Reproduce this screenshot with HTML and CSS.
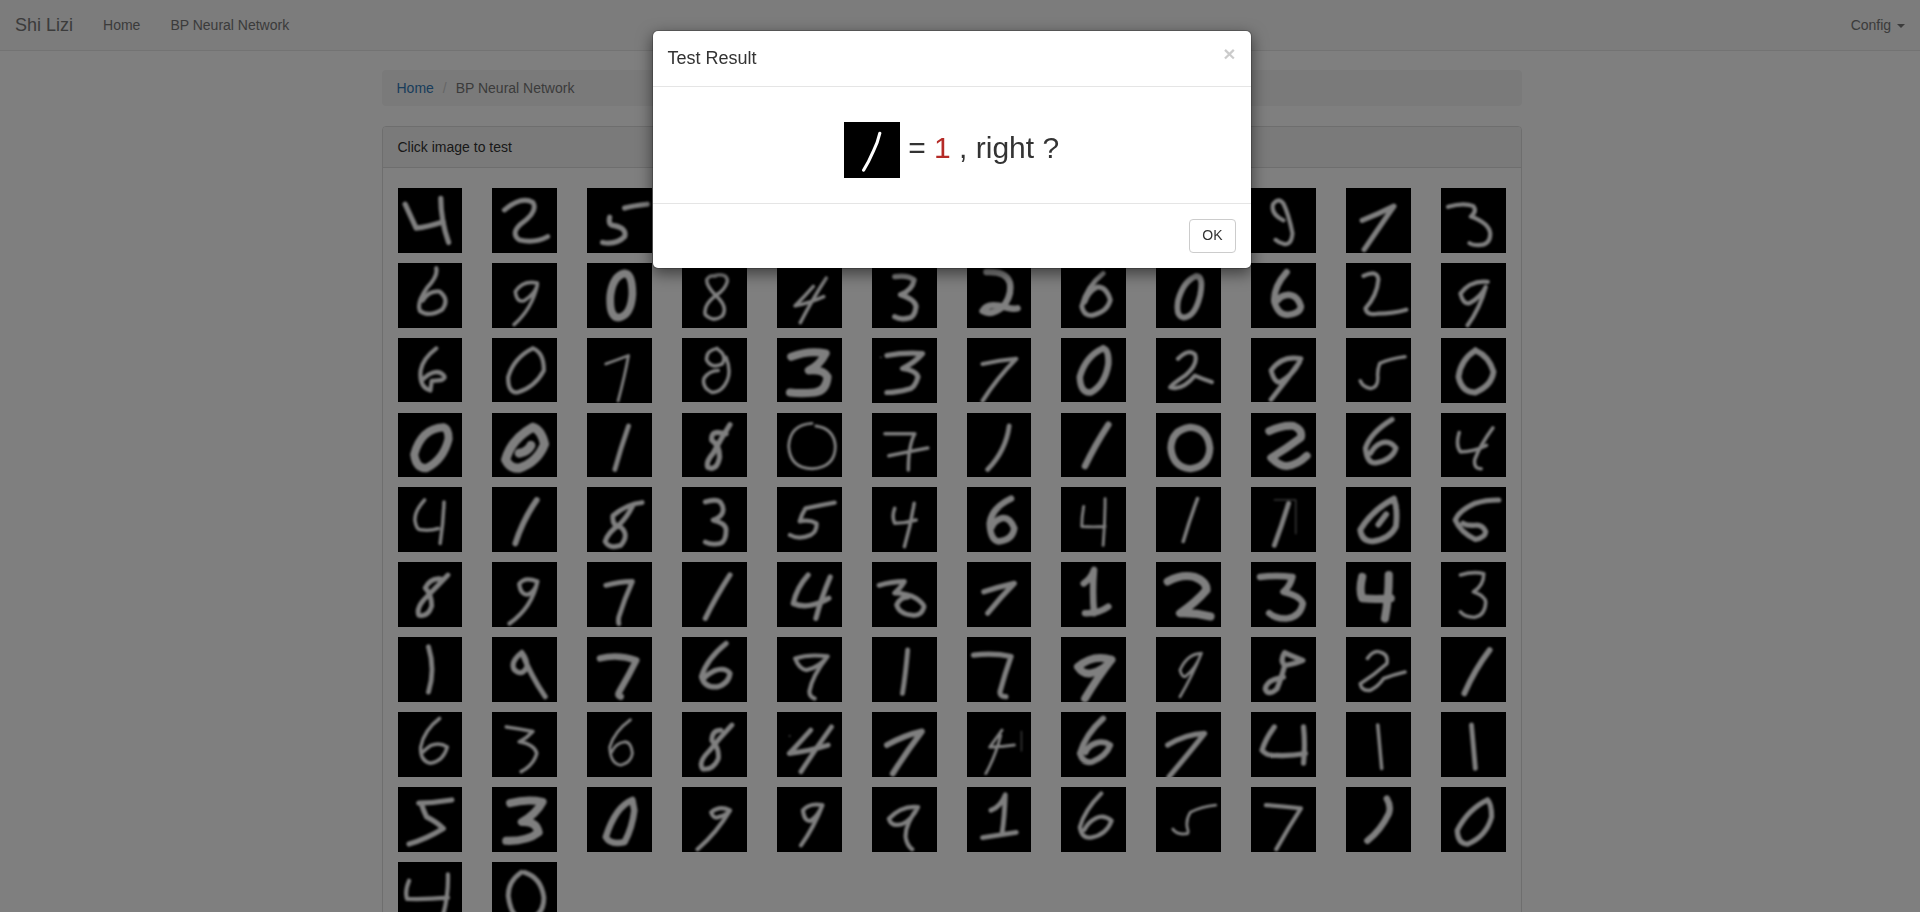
FILE: index.html
```html
<!DOCTYPE html>
<html lang="en">
<head>
    <meta charset="UTF-8">
    <meta name="viewport" content="width=device-width, initial-scale=1.0">
    <title>BP Neural Network</title>
    <link rel="stylesheet" href="styles.css">
</head>
<body>

    <nav class="navbar">
        <a class="navbar-brand" href="#">Shi Lizi</a>
        <ul class="navbar-nav">
            <li><a href="#">Home</a></li>
            <li><a href="#">BP Neural Network</a></li>
        </ul>
        <ul class="navbar-nav navbar-right">
            <li><a href="#">Config <span class="caret"></span></a></li>
        </ul>
    </nav>

    <div class="container">
        <ol class="breadcrumb">
            <li><a href="#">Home</a></li>
            <li class="active">BP Neural Network</li>
        </ol>

        <div class="panel">
            <div class="panel-heading">Click image to test</div>
            <div class="panel-body">
                <div class="digit-grid">
                    <!-- row 1 -->
                    <div class="cell"><svg class="digit w9" viewBox="0 0 100 100"><path d="M11 25 L28 62 Q45 60 70 52 M66 16 Q66 50 78 84"/></svg></div>
                    <div class="cell"><svg class="digit w8" viewBox="0 0 100 100"><path d="M19 34 Q45 12 63 22 Q72 36 45 55 Q28 70 42 80 Q65 86 86 75"/></svg></div>
                    <div class="cell"><svg class="digit w9" viewBox="0 0 100 100"><path d="M93 25 Q72 27 58 31 M35 45 Q32 58 42 58 Q62 62 58 75 Q45 88 24 84"/></svg></div>
                    <div class="cell"><svg class="digit w8" viewBox="0 0 100 100"><path d="M30 20 H70 L45 90"/></svg></div>
                    <div class="cell"><svg class="digit w8" viewBox="0 0 100 100"><path d="M60 18 L45 85"/></svg></div>
                    <div class="cell"><svg class="digit w8" viewBox="0 0 100 100"><path d="M30 25 Q60 10 66 35 Q60 60 30 80 H75"/></svg></div>
                    <div class="cell"><svg class="digit w8" viewBox="0 0 100 100"><path d="M68 20 Q30 20 32 50 Q34 84 52 84 Q74 78 68 55 Q50 44 34 58"/></svg></div>
                    <div class="cell"><svg class="digit w8" viewBox="0 0 100 100"><path d="M50 16 Q28 40 32 66 Q46 90 68 66 Q74 34 50 16"/></svg></div>
                    <div class="cell"><svg class="digit w8" viewBox="0 0 100 100"><path d="M30 25 H72 Q50 45 48 52 Q74 60 66 80 Q48 92 30 80"/></svg></div>
                    <div class="cell"><svg class="digit w7" viewBox="0 0 100 100"><path d="M50 50 Q30 40 34 25 Q42 14 50 24 Q58 40 64 70 Q62 90 50 86 Q42 84 38 80"/></svg></div>
                    <div class="cell"><svg class="digit w9" viewBox="0 0 100 100"><path d="M25 50 Q50 40 74 28 Q55 55 28 95"/></svg></div>
                    <div class="cell"><svg class="digit w7" viewBox="0 0 100 100"><path d="M11 29 Q35 22 50 28 Q56 36 46 44 Q74 54 76 70 Q76 88 58 88 Q48 88 44 85"/></svg></div>
                    <!-- row 2 -->
                    <div class="cell"><svg class="digit w7" viewBox="0 0 100 100"><path d="M59 8 Q62 20 45 38 Q28 62 34 74 Q48 84 68 72 Q80 56 64 44 Q48 42 38 58"/></svg></div>
                    <div class="cell"><svg class="digit w6" viewBox="0 0 100 100"><path d="M70 31 Q48 26 36 44 Q38 62 50 58 Q66 48 70 34 Q62 70 34 95"/></svg></div>
                    <div class="cell"><svg class="digit w13" viewBox="0 0 100 100"><path d="M58 16 Q40 20 36 50 Q34 86 50 84 Q68 80 70 48 Q70 16 58 16"/></svg></div>
                    <div class="cell"><svg class="digit w6" viewBox="0 0 100 100"><path d="M48 20 Q70 14 70 28 Q66 42 52 50 Q72 68 62 82 Q48 92 36 80 Q32 66 52 50 Q38 36 38 26 Q42 18 52 20"/></svg></div>
                    <div class="cell"><svg class="digit w6" viewBox="0 0 100 100"><path d="M76 23 Q55 55 36 92 M56 36 Q42 52 28 66 Q50 62 72 52"/></svg></div>
                    <div class="cell"><svg class="digit w9" viewBox="0 0 100 100"><path d="M35 21 Q55 18 65 26 Q62 42 44 49 Q66 56 68 67 Q66 84 56 85 Q44 88 35 83"/></svg></div>
                    <div class="cell"><svg class="digit w11" viewBox="0 0 100 100"><path d="M30 14 Q60 12 66 30 Q70 50 55 68 Q38 82 24 74 Q30 62 50 66 Q68 72 78 70"/></svg></div>
                    <div class="cell"><svg class="digit w8" viewBox="0 0 100 100"><path d="M65 16 Q40 36 32 67 Q36 84 51 80 Q72 74 76 57 Q70 36 56 37 Q42 44 37 60"/></svg></div>
                    <div class="cell"><svg class="digit w10" viewBox="0 0 100 100"><path d="M62 20 Q42 28 34 58 Q30 82 42 84 Q60 84 68 50 Q74 20 62 20"/></svg></div>
                    <div class="cell"><svg class="digit w11" viewBox="0 0 100 100"><path d="M55 14 Q34 38 36 60 Q42 80 56 80 Q76 78 77 67 Q72 50 58 49 Q46 50 42 57"/></svg></div>
                    <div class="cell"><svg class="digit w7" viewBox="0 0 100 100"><path d="M27 20 Q48 10 50 25 Q48 50 30 70 Q32 82 50 78 Q72 78 93 72"/></svg></div>
                    <div class="cell"><svg class="digit w7" viewBox="0 0 100 100"><path d="M72 29 Q46 26 30 47 Q34 64 44 62 Q62 52 69 37 Q60 70 41 96"/></svg></div>
                    <!-- row 3 -->
                    <div class="cell"><svg class="digit w7" viewBox="0 0 100 100"><path d="M59 16 Q38 32 35 50 Q32 76 50 81 L52 66 Q76 66 71 58 Q62 48 48 56 Q40 62 36 66"/></svg></div>
                    <div class="cell"><svg class="digit w7" viewBox="0 0 100 100"><path d="M63 16 Q34 30 25 60 Q24 84 39 84 Q66 76 80 50 Q80 22 63 16"/></svg></div>
                    <div class="cell"><svg class="digit w5" viewBox="0 0 100 100"><path d="M29 40 Q46 34 64 27 Q58 60 48 97"/></svg></div>
                    <div class="cell"><svg class="digit w6" viewBox="0 0 100 100"><path d="M54 16 Q36 20 38 34 Q46 48 62 40 Q70 28 56 18 M68 30 Q76 50 70 65 Q62 84 46 84 Q30 76 34 62 Q42 50 56 50"/></svg></div>
                    <div class="cell"><svg class="digit w14" viewBox="0 0 100 100"><path d="M22 29 Q50 18 75 24 Q66 42 49 50 Q72 48 78 60 Q76 82 58 84 Q36 86 20 84"/></svg></div>
                    <div class="cell"><svg class="digit w9" viewBox="0 0 100 100"><path d="M23 27 Q50 22 78 24 Q66 38 47 47 Q68 50 71 60 Q66 78 56 79 Q38 84 23 84"/><path class="speck" d="M13 30 h1"/></svg></div>
                    <div class="cell"><svg class="digit w7" viewBox="0 0 100 100"><path d="M24 40 Q50 34 76 32 Q46 62 24 97"/></svg></div>
                    <div class="cell"><svg class="digit w11" viewBox="0 0 100 100"><path d="M65 16 Q38 28 29 60 Q30 86 46 84 Q68 72 73 40 Q74 18 65 16"/></svg></div>
                    <div class="cell"><svg class="digit w7" viewBox="0 0 100 100"><path d="M34 32 Q50 16 60 25 Q66 40 45 58 Q24 72 22 76 Q40 82 60 58 Q74 64 86 68"/></svg></div>
                    <div class="cell"><svg class="digit w8" viewBox="0 0 100 100"><path d="M77 32 Q48 26 31 50 Q36 70 45 68 Q64 58 75 37 Q54 66 31 95"/></svg></div>
                    <div class="cell"><svg class="digit w6" viewBox="0 0 100 100"><path d="M91 29 Q68 32 52 39 Q48 50 49 60 Q50 76 38 78 Q26 76 22 66"/></svg></div>
                    <div class="cell"><svg class="digit w10" viewBox="0 0 100 100"><path d="M53 19 Q30 34 27 60 Q32 84 53 84 Q78 74 81 52 Q74 28 53 19"/></svg></div>
                    <!-- row 4 -->
                    <div class="cell"><svg class="digit w14" viewBox="0 0 100 100"><path d="M70 22 Q36 24 25 64 Q28 86 44 85 Q70 72 78 40 Q78 24 70 22"/></svg></div>
                    <div class="cell"><svg class="digit w15" viewBox="0 0 100 100"><path d="M63 22 Q30 40 21 72 Q28 86 42 85 Q70 76 81 48 Q76 26 63 22 M42 62 Q55 60 60 50"/></svg></div>
                    <div class="cell"><svg class="digit w8" viewBox="0 0 100 100"><path d="M64 20 Q52 54 43 87"/></svg></div>
                    <div class="cell"><svg class="digit w9" viewBox="0 0 100 100"><path d="M74 18 Q60 40 48 62 Q36 76 40 84 Q54 90 58 68 Q58 50 46 42 Q44 30 56 30 L68 32"/></svg></div>
                    <div class="cell"><svg class="digit w5" viewBox="0 0 100 100"><path d="M54 16 Q20 18 18 51 Q20 85 54 86 Q90 84 90 51 Q88 24 60 20"/></svg></div>
                    <div class="cell"><svg class="digit w6" viewBox="0 0 100 100"><path d="M20 32 Q45 32 66 32 Q56 50 56 88 M26 66 Q55 60 86 54"/></svg></div>
                    <div class="cell"><svg class="digit w8" viewBox="0 0 100 100"><path d="M65 20 Q60 58 32 87"/></svg></div>
                    <div class="cell"><svg class="digit w11" viewBox="0 0 100 100"><path d="M73 18 Q52 50 37 82"/></svg></div>
                    <div class="cell"><svg class="digit w12" viewBox="0 0 100 100"><path d="M53 22 Q24 26 23 54 Q26 84 53 86 Q82 82 83 54 Q80 24 53 22"/></svg></div>
                    <div class="cell"><svg class="digit w13" viewBox="0 0 100 100"><path d="M28 28 Q50 18 66 20 Q80 26 77 38 Q56 54 31 69 Q44 82 55 82 Q72 80 86 66"/></svg></div>
                    <div class="cell"><svg class="digit w9" viewBox="0 0 100 100"><path d="M71 10 Q38 30 30 54 Q32 78 46 77 Q72 72 77 54 Q68 42 55 46 Q44 50 38 62"/></svg></div>
                    <div class="cell"><svg class="digit w6" viewBox="0 0 100 100"><path d="M28 30 Q22 50 30 60 Q50 60 70 50 M80 23 Q60 50 52 72 Q50 86 62 86"/></svg></div>
                    <!-- row 5 -->
                    <div class="cell"><svg class="digit w6" viewBox="0 0 100 100"><path d="M41 20 Q26 36 26 51 Q28 66 35 66 Q50 68 62 64 M71 23 Q70 55 65 87"/></svg></div>
                    <div class="cell"><svg class="digit w10" viewBox="0 0 100 100"><path d="M69 20 Q48 50 36 87"/></svg></div>
                    <div class="cell"><svg class="digit w8" viewBox="0 0 100 100"><path d="M85 24 Q62 26 40 44 Q38 60 52 62 Q66 74 52 90 Q34 96 28 84 Q32 70 50 58 Q62 46 70 30"/></svg></div>
                    <div class="cell"><svg class="digit w8" viewBox="0 0 100 100"><path d="M36 23 Q52 18 59 23 Q66 32 62 41 Q58 48 48 51 Q68 56 68 66 Q68 84 59 87 Q46 90 36 85"/></svg></div>
                    <div class="cell"><svg class="digit w7" viewBox="0 0 100 100"><path d="M89 24 Q66 28 44 33 Q38 42 35 53 Q50 50 61 56 Q62 68 52 74 Q34 82 20 74"/></svg></div>
                    <div class="cell"><svg class="digit w6" viewBox="0 0 100 100"><path d="M35 33 Q30 46 35 56 Q52 56 68 51 M65 25 Q60 58 50 92"/></svg></div>
                    <div class="cell"><svg class="digit w11" viewBox="0 0 100 100"><path d="M68 18 Q38 32 35 56 Q36 82 49 84 Q70 82 73 64 Q66 46 54 48 Q42 52 38 62"/></svg></div>
                    <div class="cell"><svg class="digit w5" viewBox="0 0 100 100"><path d="M35 30 Q32 46 32 61 Q50 62 68 61 M68 18 Q68 54 65 90"/></svg></div>
                    <div class="cell"><svg class="digit w6" viewBox="0 0 100 100"><path d="M64 18 Q52 50 42 84"/></svg></div>
                    <div class="cell"><svg class="digit w8" viewBox="0 0 100 100"><path d="M58 25 Q48 58 36 90"/><path class="faint" d="M36 20 H69 V72"/></svg></div>
                    <div class="cell"><svg class="digit w10" viewBox="0 0 100 100"><path d="M74 18 Q40 36 22 66 Q24 84 41 84 Q68 80 77 61 Q80 34 74 18 M62 42 Q56 50 50 58"/></svg></div>
                    <div class="cell"><svg class="digit w9" viewBox="0 0 100 100"><path d="M89 20 Q68 20 53 25 Q28 36 22 51 Q30 70 53 81 Q68 78 69 69 Q64 58 53 59 Q40 60 34 56"/></svg></div>
                    <!-- row 6 -->
                    <div class="cell"><svg class="digit w8" viewBox="0 0 100 100"><path d="M77 20 Q60 38 40 58 Q28 72 32 82 Q46 86 52 68 Q52 50 42 40 Q50 24 66 26"/></svg></div>
                    <div class="cell"><svg class="digit w7" viewBox="0 0 100 100"><path d="M70 30 Q50 22 42 34 Q44 52 56 50 Q68 44 70 30 Q62 70 27 95"/></svg></div>
                    <div class="cell"><svg class="digit w8" viewBox="0 0 100 100"><path d="M29 36 Q50 30 70 30 Q58 56 49 85 Q48 92 49 95"/></svg></div>
                    <div class="cell"><svg class="digit w9" viewBox="0 0 100 100"><path d="M74 20 Q52 54 36 87"/></svg></div>
                    <div class="cell"><svg class="digit w9" viewBox="0 0 100 100"><path d="M48 20 Q30 40 25 64 Q40 70 55 66 Q70 62 80 56 M82 23 Q68 56 60 87"/></svg></div>
                    <div class="cell"><svg class="digit w8" viewBox="0 0 100 100"><path d="M11 36 Q30 30 50 30 Q46 38 35 48 Q55 48 68 56 Q82 66 80 70 Q76 84 62 82 Q42 80 38 66 Q44 54 56 54"/></svg></div>
                    <div class="cell"><svg class="digit w9" viewBox="0 0 100 100"><path d="M26 46 Q50 38 73 33 Q52 54 32 79"/></svg></div>
                    <div class="cell"><svg class="digit w11" viewBox="0 0 100 100"><path d="M35 33 Q46 26 51 12 Q48 46 51 79 M37 79 Q58 80 73 69"/></svg></div>
                    <div class="cell"><svg class="digit w14" viewBox="0 0 100 100"><path d="M18 30 Q40 18 59 23 Q78 30 78 43 Q62 62 37 79 Q60 78 84 84"/></svg></div>
                    <div class="cell"><svg class="digit w11" viewBox="0 0 100 100"><path d="M14 23 Q40 20 64 23 Q60 38 50 46 Q76 52 80 64 Q76 84 56 87 Q38 88 28 79"/></svg></div>
                    <div class="cell"><svg class="digit w14" viewBox="0 0 100 100"><path d="M25 23 Q20 44 25 56 Q46 58 69 56 M66 20 Q66 56 60 87"/></svg></div>
                    <div class="cell"><svg class="digit w6" viewBox="0 0 100 100"><path d="M30 20 Q50 14 66 18 Q66 36 50 46 Q68 52 69 62 Q68 82 53 85 Q38 86 30 77"/></svg></div>
                    <!-- row 7 -->
                    <div class="cell"><svg class="digit w8" viewBox="0 0 100 100"><path d="M47 15 Q58 50 47 85"/></svg></div>
                    <div class="cell"><svg class="digit w9" viewBox="0 0 100 100"><path d="M46 24 Q28 38 34 50 Q46 62 54 46 Q54 34 46 24 Q60 60 82 92"/></svg></div>
                    <div class="cell"><svg class="digit w11" viewBox="0 0 100 100"><path d="M20 33 Q48 26 76 36 Q64 60 50 84 Q46 90 52 92"/></svg></div>
                    <div class="cell"><svg class="digit w9" viewBox="0 0 100 100"><path d="M68 10 Q38 34 30 61 Q34 78 54 77 Q72 72 74 56 Q66 46 50 52 Q38 58 32 66"/></svg></div>
                    <div class="cell"><svg class="digit w7" viewBox="0 0 100 100"><path d="M78 30 Q50 26 28 33 Q34 50 46 51 Q66 46 78 30 Q54 60 50 84 Q50 92 58 95"/></svg></div>
                    <div class="cell"><svg class="digit w8" viewBox="0 0 100 100"><path d="M55 20 Q52 56 47 87"/></svg></div>
                    <div class="cell"><svg class="digit w9" viewBox="0 0 100 100"><path d="M10 28 Q40 24 68 30 Q58 58 51 84 Q50 92 60 92"/></svg></div>
                    <div class="cell"><svg class="digit w13" viewBox="0 0 100 100"><path d="M78 35 Q50 26 26 46 Q34 58 46 56 Q66 52 78 35 Q58 60 37 95"/></svg></div>
                    <div class="cell"><svg class="digit w5" viewBox="0 0 100 100"><path d="M70 25 Q48 26 37 51 Q40 62 45 61 Q62 48 70 25 Q56 60 37 92"/></svg></div>
                    <div class="cell"><svg class="digit w9" viewBox="0 0 100 100"><path d="M80 36 Q60 28 52 24 Q44 36 52 44 Q72 40 80 36 M52 44 Q46 66 40 80 Q26 92 22 80 Q24 66 50 62"/></svg></div>
                    <div class="cell"><svg class="digit w6" viewBox="0 0 100 100"><path d="M33 33 Q42 20 52 23 Q66 26 63 41 Q44 58 22 72 Q24 84 38 82 Q50 76 58 64 Q74 58 91 54"/></svg></div>
                    <div class="cell"><svg class="digit w10" viewBox="0 0 100 100"><path d="M75 20 Q52 50 36 87"/></svg></div>
                    <!-- row 8 -->
                    <div class="cell"><svg class="digit w6" viewBox="0 0 100 100"><path d="M64 10 Q40 28 35 54 Q34 76 50 79 Q70 76 76 54 Q64 46 50 52 Q44 56 38 62"/></svg></div>
                    <div class="cell"><svg class="digit w6" viewBox="0 0 100 100"><path d="M22 23 Q44 26 63 30 Q54 40 42 46 Q66 50 69 64 Q64 82 45 92"/></svg></div>
                    <div class="cell"><svg class="digit w5" viewBox="0 0 100 100"><path d="M67 12 Q42 30 35 54 Q36 80 52 82 Q68 78 70 64 Q68 46 58 46 Q44 48 38 62"/></svg></div>
                    <div class="cell"><svg class="digit w8" viewBox="0 0 100 100"><path d="M77 20 Q58 40 42 60 Q24 78 32 88 Q48 90 56 72 Q58 56 46 44 Q46 28 60 28"/></svg></div>
                    <div class="cell"><svg class="digit w8" viewBox="0 0 100 100"><path d="M84 23 Q60 56 37 92 M52 28 Q34 48 19 64 Q50 60 79 51"/><path class="speck" d="M19 37 h1"/></svg></div>
                    <div class="cell"><svg class="digit w10" viewBox="0 0 100 100"><path d="M23 51 Q50 36 77 30 Q54 60 32 95"/></svg></div>
                    <div class="cell"><svg class="digit w5" viewBox="0 0 100 100"><path d="M54 28 Q44 42 35 54 Q54 54 73 51 M52 36 Q44 68 29 95"/><path class="faint" d="M84 30 V60"/></svg></div>
                    <div class="cell"><svg class="digit w10" viewBox="0 0 100 100"><path d="M65 10 Q38 34 29 64 Q34 80 48 77 Q70 68 76 51 Q66 44 54 48 Q42 52 38 62"/></svg></div>
                    <div class="cell"><svg class="digit w9" viewBox="0 0 100 100"><path d="M18 51 Q46 34 75 33 Q52 62 20 100"/></svg></div>
                    <div class="cell"><svg class="digit w9" viewBox="0 0 100 100"><path d="M36 23 Q22 42 17 59 Q24 68 39 67 Q62 68 84 64 M81 23 Q84 50 81 79"/></svg></div>
                    <div class="cell"><svg class="digit w6" viewBox="0 0 100 100"><path d="M49 20 Q52 54 55 87"/></svg></div>
                    <div class="cell"><svg class="digit w8" viewBox="0 0 100 100"><path d="M47 20 Q50 54 53 87"/></svg></div>
                    <!-- row 9 -->
                    <div class="cell"><svg class="digit w9" viewBox="0 0 100 100"><path d="M32 25 Q58 24 83 20 M36 26 Q40 38 44 46 Q60 54 70 64 Q44 80 17 88"/></svg></div>
                    <div class="cell"><svg class="digit w14" viewBox="0 0 100 100"><path d="M28 25 Q54 18 78 23 Q68 42 46 54 Q68 52 72 70 Q54 84 22 83"/></svg></div>
                    <div class="cell"><svg class="digit w11" viewBox="0 0 100 100"><path d="M70 20 Q44 30 29 77 Q36 90 58 85 Q70 62 73 36 L70 20"/></svg></div>
                    <div class="cell"><svg class="digit w7" viewBox="0 0 100 100"><path d="M74 36 Q58 28 45 39 Q48 50 57 46 Q68 44 74 36 Q54 70 24 96"/></svg></div>
                    <div class="cell"><svg class="digit w7" viewBox="0 0 100 100"><path d="M70 28 Q50 24 40 36 Q42 54 52 52 Q64 44 70 28 Q58 60 37 90"/></svg></div>
                    <div class="cell"><svg class="digit w7" viewBox="0 0 100 100"><path d="M71 31 Q46 28 26 49 Q30 62 47 57 Q62 50 71 31 Q50 60 52 78 Q54 90 62 96"/></svg></div>
                    <div class="cell"><svg class="digit w8" viewBox="0 0 100 100"><path d="M37 36 Q52 30 59 12 Q58 46 54 72 M24 78 Q50 74 76 70"/></svg></div>
                    <div class="cell"><svg class="digit w7" viewBox="0 0 100 100"><path d="M62 10 Q36 36 29 62 Q32 80 46 78 Q70 74 78 52 Q66 42 54 48 Q42 54 36 66"/></svg></div>
                    <div class="cell"><svg class="digit w5" viewBox="0 0 100 100"><path d="M92 28 Q70 30 53 39 Q46 50 48 62 Q52 74 45 72 Q32 74 26 65"/></svg></div>
                    <div class="cell"><svg class="digit w7" viewBox="0 0 100 100"><path d="M23 28 Q50 30 77 33 Q58 62 39 96"/></svg></div>
                    <div class="cell"><svg class="digit w11" viewBox="0 0 100 100"><path d="M63 18 Q70 30 66 41 Q54 66 33 83"/></svg></div>
                    <div class="cell"><svg class="digit w9" viewBox="0 0 100 100"><path d="M72 20 Q42 34 25 67 Q26 88 41 88 Q70 76 78 46 Q78 26 72 20"/></svg></div>
                    <!-- row 10 -->
                    <div class="cell"><svg class="digit w7" viewBox="0 0 100 100"><path d="M17 29 Q10 46 14 57 Q44 58 77 55 M77 19 Q78 50 70 80"/></svg></div>
                    <div class="cell"><svg class="digit w8" viewBox="0 0 100 100"><path d="M45 16 Q25 30 25 52 Q30 90 52 90 Q80 84 80 55 Q76 24 50 16"/></svg></div>
                </div>
            </div>
        </div>
    </div>

    <div class="modal-backdrop"></div>

    <div class="modal">
        <div class="modal-dialog">
            <div class="modal-header">
                <button class="close" type="button">&times;</button>
                <h4 class="modal-title">Test Result</h4>
            </div>
            <div class="modal-body">
                <h2 class="result"><svg class="digit result-digit w6" viewBox="0 0 100 100"><path d="M64 20 Q60 38 52 53 Q44 72 35 86"/></svg> = <span class="answer">1</span> , right ?</h2>
            </div>
            <div class="modal-footer">
                <button class="btn" type="button">OK</button>
            </div>
        </div>
    </div>

</body>
</html>
```

FILE: styles.css
```css
* {
    box-sizing: border-box;
}

body {
    font-family: "Liberation Sans", Arial, sans-serif;
    font-size: 14px;
    line-height: 1.42857;
    color: #333;
    background-color: #fff;
    margin: 0;
    padding: 70px 17px 0 0;
    height: 912px;
    overflow: hidden;
}

a {
    color: #337ab7;
    text-decoration: none;
}

ul, ol {
    list-style: none;
    margin: 0;
    padding: 0;
}

.navbar {
    position: fixed;
    top: 0;
    left: 0;
    right: 0;
    z-index: 10;
    display: flex;
    min-height: 51px;
    background-color: #f8f8f8;
    border-bottom: 1px solid #e7e7e7;
}

.navbar-brand {
    font-size: 18px;
    line-height: 20px;
    padding: 15px;
    color: #777;
}

.navbar-nav {
    display: flex;
}

.navbar-nav a {
    display: block;
    line-height: 20px;
    padding: 15px;
    color: #777;
}

.navbar-right {
    margin-left: auto;
}

.caret {
    display: inline-block;
    width: 0;
    height: 0;
    margin-left: 2px;
    vertical-align: middle;
    border-top: 4px solid #777;
    border-right: 4px solid transparent;
    border-left: 4px solid transparent;
}

.container {
    width: 1170px;
    margin: 0 auto;
    padding: 0 15px;
}

.breadcrumb {
    display: flex;
    gap: 4px;
    padding: 9px 15px 7px;
    margin-bottom: 20px;
    background-color: #f5f5f5;
    border-radius: 4px;
}

.breadcrumb li + li::before {
    content: "/\00a0";
    padding: 0 5px;
    color: #ccc;
}

.breadcrumb .active {
    color: #777;
}

.panel {
    background-color: #fff;
    border: 1px solid #ddd;
    border-radius: 4px;
    margin-bottom: 20px;
}

.panel-heading {
    padding: 11px 15px 9px;
    background-color: #f5f5f5;
    border-bottom: 1px solid #ddd;
    border-radius: 3px 3px 0 0;
}

.panel-body {
    padding: 15px;
}

.digit-grid {
    display: grid;
    grid-template-columns: repeat(12, 1fr);
    margin: 0 -15px;
}

.cell {
    padding: 0 15px;
}

.digit {
    display: block;
    width: 100%;
    height: auto;
    margin: 5px 0;
    background-color: #000;
}

.digit path {
    fill: none;
    stroke: #fff;
    stroke-linecap: round;
    stroke-linejoin: round;
    filter: blur(1.3px);
}

.digit .faint {
    stroke-width: 2;
    opacity: .5;
}

.digit .speck {
    stroke-width: 2;
    opacity: .7;
}

.w5 { stroke-width: 4.5; }
.w6 { stroke-width: 5.5; }
.w7 { stroke-width: 6.5; }
.w8 { stroke-width: 7.5; }
.w9 { stroke-width: 8; }
.w10 { stroke-width: 9; }
.w11 { stroke-width: 10; }
.w12 { stroke-width: 11; }
.w13 { stroke-width: 12; }
.w14 { stroke-width: 12.5; }
.w15 { stroke-width: 14; }

.modal-backdrop {
    position: fixed;
    top: 0;
    right: 0;
    bottom: 0;
    left: 0;
    z-index: 20;
    background-color: #000;
    opacity: .5;
}

.modal {
    position: fixed;
    top: 0;
    right: 0;
    bottom: 0;
    left: 0;
    z-index: 30;
    padding-right: 17px;
}

.modal-dialog {
    width: 600px;
    margin: 30px auto;
    background-color: #fff;
    border: 1px solid rgba(0, 0, 0, .2);
    border-radius: 6px;
    box-shadow: 0 5px 15px rgba(0, 0, 0, .5);
    background-clip: padding-box;
}

.modal-header {
    padding: 15px;
    border-bottom: 1px solid #e5e5e5;
}

.modal-title {
    margin: 0;
    font-size: 18px;
    font-weight: 500;
    line-height: 25px;
}

.close {
    float: right;
    margin-top: -3px;
    padding: 0;
    border: 0;
    background: transparent;
    font-family: inherit;
    font-size: 21px;
    font-weight: 700;
    line-height: 1;
    color: #000;
    opacity: .2;
}

.modal-body {
    padding: 15px;
}

.result {
    margin: 20px 0 10px;
    font-size: 30px;
    font-weight: 500;
    line-height: 1.1;
    text-align: center;
}

.result-digit {
    display: inline-block;
    width: 56px;
    height: 56px;
    margin: 0;
    vertical-align: middle;
}

.answer {
    color: #b52b27;
}

.modal-footer {
    padding: 15px;
    text-align: right;
    border-top: 1px solid #e5e5e5;
}

.btn {
    display: inline-block;
    padding: 6px 12px;
    font-family: inherit;
    font-size: 14px;
    line-height: 1.42857;
    color: #333;
    background-color: #fff;
    border: 1px solid #ccc;
    border-radius: 4px;
}
```
